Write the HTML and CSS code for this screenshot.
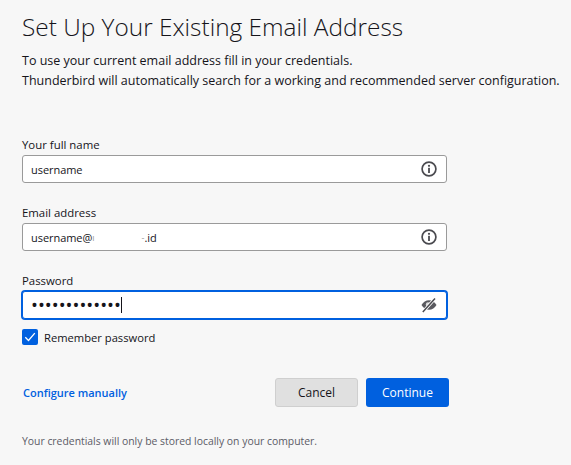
FILE: index.html
```html
<!DOCTYPE html>
<html lang="en">
<head>
<meta charset="utf-8">
<title>Set Up Your Existing Email Address</title>
<link rel="stylesheet" href="styles.css">
</head>
<body>
<main class="page">
  <h1 class="title">Set Up Your Existing Email Address</h1>
  <p class="intro">To use your current email address fill in your credentials.<br>Thunderbird will automatically search for a working and recommended server configuration.</p>
  <form class="form">
    <div class="field">
      <label class="label">Your full name</label>
      <div class="input"><span class="value">username</span>
        <svg class="icon" viewBox="0 0 16 16"><circle cx="8" cy="8" r="6.9" fill="none" stroke="#4a4a4f" stroke-width="1.7"/><circle cx="8" cy="4.8" r="1.1" fill="#4a4a4f"/><rect x="7.1" y="6.8" width="1.8" height="5.2" fill="#4a4a4f"/></svg>
      </div>
    </div>
    <div class="field">
      <label class="label">Email address</label>
      <div class="input"><span class="value">username@<span class="frag">ı</span><span class="masked"></span><span class="frag">-</span>.id</span>
        <svg class="icon" viewBox="0 0 16 16"><circle cx="8" cy="8" r="6.9" fill="none" stroke="#4a4a4f" stroke-width="1.7"/><circle cx="8" cy="4.8" r="1.1" fill="#4a4a4f"/><rect x="7.1" y="6.8" width="1.8" height="5.2" fill="#4a4a4f"/></svg>
      </div>
    </div>
    <div class="field">
      <label class="label">Password</label>
      <div class="input focused"><span class="value dots">•••••••••••••</span><span class="caret"></span>
        <svg class="icon" viewBox="0 0 16 16"><path d="M.5 8C2.300 5 4.800 3.300 8 3.300S13.700 5 15.500 8c-1.800 3-4.300 4.700-7.500 4.700S2.300 11 .5 8z" fill="#5a5a5f"/><circle cx="7" cy="7.500" r="2.200" fill="#d8d8d8"/><path d="M1.800 15 14 1.500" stroke="#fff" stroke-width="3.200"/><path d="M1.800 15 14 1.500" stroke="#4a4a4f" stroke-width="1.500"/></svg>
      </div>
    </div>
    <label class="remember">
      <span class="check"><svg viewBox="0 0 16 16"><path d="M3.300 8.300 6.500 11.500 12.800 4.200" fill="none" stroke="#fff" stroke-width="1.300"/></svg></span>
      <span class="remember-text">Remember password</span>
    </label>
    <div class="actions">
      <a class="manual">Configure manually</a>
      <div class="buttons">
        <button type="button" class="btn cancel">Cancel</button>
        <button type="button" class="btn primary">Continue</button>
      </div>
    </div>
    <p class="note">Your credentials will only be stored locally on your computer.</p>
  </form>
</main>
</body>
</html>
```

FILE: styles.css
```css
* { box-sizing: border-box; }
html, body { margin: 0; height: 100%; }
body {
  background: #f7f7f7;
  color: #15141a;
  font-family: "Open Sans", "Noto Sans", sans-serif;
  font-size: 12px;
  overflow: hidden;
}
.page { padding: 8px 0 0 22px; width: 571px; }
.title {
  margin: 0;
  font-size: 24.4px;
  font-weight: 300;
  line-height: 38px;
  white-space: nowrap;
}
.intro {
  margin: 5px 0 0;
  font-size: 12.5px;
  line-height: 20px;
  white-space: nowrap;
}
.form { margin-top: 46px; width: 427px; }
.field + .field { margin-top: 22px; }
.label { display: block; font-size: 11.4px; line-height: 16px; height: 18px; }
.input {
  display: flex;
  align-items: center;
  height: 28px;
  width: 425px;
  padding: 0 9px 0 8px;
  background: #fff;
  border: 1px solid #9a9a9a;
  border-radius: 3px;
}
.value { font-size: 11px; letter-spacing: -0.05px; white-space: nowrap; display: flex; align-items: center; }
.frag { color: #9a9a9a; font-size: 9px; }
.masked { display: inline-block; width: 47px; height: 16px; background: #fff; }
.dots { font-size: 18.4px; letter-spacing: 0; line-height: 20px; }
.caret { width: 1px; height: 16px; background: #15141a; }
.icon { width: 16px; height: 16px; margin-left: auto; }
.focused {
  border-color: #0060df;
  box-shadow: 0 0 0 1px #0060df;
}
.remember { display: flex; align-items: center; gap: 6px; margin-top: 10px; height: 16px; font-size: 11.2px; }
.check {
  width: 16px; height: 16px;
  background: #0060df;
  border-radius: 2px;
  display: block;
}
.check svg { display: block; width: 16px; height: 16px; }
.actions {
  display: flex;
  justify-content: space-between;
  align-items: center;
  margin-top: 33px;
  height: 29px;
}
.manual { color: #0060df; font-weight: 600; font-size: 11px; margin-left: 1px; }
.buttons { display: flex; gap: 8px; }
.btn {
  height: 29px;
  width: 83px;
  border-radius: 3px;
  font: inherit;
  padding: 0;
}
.cancel { background: #e0e0e0; border: 1px solid #cfcfcf; color: #15141a; }
.primary { background: #0060df; border: 0; color: #fff; }
.note { margin: 26px 0 0; color: #5b5b66; font-size: 10.4px; line-height: 16px; white-space: nowrap; }
```
